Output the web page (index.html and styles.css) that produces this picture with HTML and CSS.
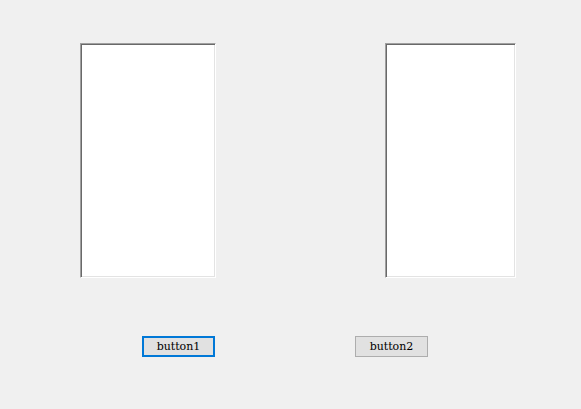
FILE: index.html
```html
<!DOCTYPE html>
<html lang="en">
<head>
    <meta charset="UTF-8">
    <meta name="viewport" content="width=device-width, initial-scale=1.0">
    <title>Form1</title>
    <link rel="stylesheet" href="styles.css">
</head>
<body>
    <div class="form">
        <div class="panels">
            <textarea class="list list-left"></textarea>
            <textarea class="list list-right"></textarea>
        </div>
        <div class="buttons">
            <button class="btn btn-focus">button1</button>
            <button class="btn">button2</button>
        </div>
    </div>
</body>
</html>
```

FILE: styles.css
```css
html, body {
    margin: 0;
    padding: 0;
    background-color: #f0f0f0;
}
.form {
    width: 581px;
    height: 409px;
    box-sizing: border-box;
    padding: 43px 0 0 80px;
}
.panels {
    display: flex;
    gap: 169px;
}
.list {
    display: block;
    margin: 0;
    padding: 0;
    height: 235px;
    box-sizing: border-box;
    background-color: #fff;
    border: 1px solid;
    border-color: #a0a0a0 #fff #fff #a0a0a0;
    box-shadow: inset 1px 1px 0 #696969, inset -1px -1px 0 #e3e3e3;
    resize: none;
    outline: none;
}
.list-left {
    width: 136px;
}
.list-right {
    width: 131px;
}
.buttons {
    display: flex;
    gap: 140px;
    margin-top: 58px;
    padding-left: 62px;
}
.btn {
    width: 73px;
    height: 21px;
    box-sizing: border-box;
    margin: 0;
    padding: 0;
    background-color: #e1e1e1;
    border: 1px solid #adadad;
    border-radius: 0;
    font-family: "DejaVu Serif", serif;
    font-size: 11px;
    color: #000;
}
.btn-focus {
    border: 2px solid #0078d7;
}
```
